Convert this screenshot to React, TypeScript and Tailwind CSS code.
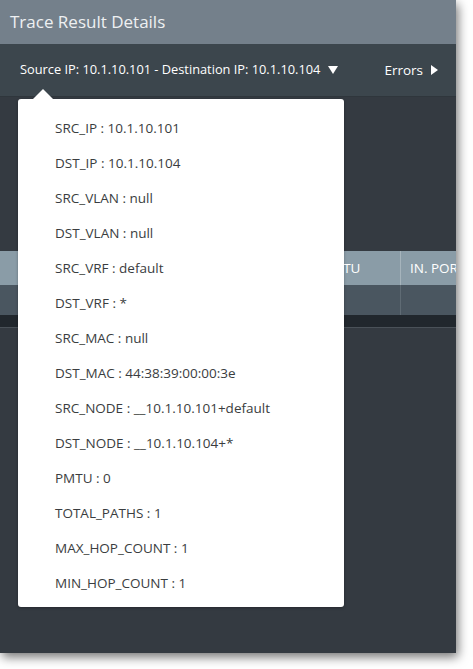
import React from 'react';

const fields = [
    ['SRC_IP', '10.1.10.101'],
    ['DST_IP', '10.1.10.104'],
    ['SRC_VLAN', 'null'],
    ['DST_VLAN', 'null'],
    ['SRC_VRF', 'default'],
    ['DST_VRF', '*'],
    ['SRC_MAC', 'null'],
    ['DST_MAC', '44:38:39:00:00:3e'],
    ['SRC_NODE', '__10.1.10.101+default'],
    ['DST_NODE', '__10.1.10.104+*'],
    ['PMTU', '0'],
    ['TOTAL_PATHS', '1'],
    ['MAX_HOP_COUNT', '1'],
    ['MIN_HOP_COUNT', '1'],
];

// widths of the table columns; the first ones sit under the popover
const columns = [
    { label: '', w: 'w-[110px]' },
    { label: '', w: 'w-[110px]' },
    { label: '', w: 'w-[102px]' },
    { label: 'MTU', w: 'w-[79px]' },
    { label: 'IN. PORT', w: 'w-[110px]' },
];

const font = { fontFamily: '"Open Sans", "Liberation Sans", sans-serif' };

export default function App() {
    return (
        <div className="w-[473px] h-[669px] bg-white overflow-hidden" style={font}>
            <div className="relative w-[456px] h-[653px] bg-[#343a41] flex flex-col shadow-[2px_4px_10px_rgba(0,0,0,0.55)] overflow-hidden">
                {/* Title */}
                <div className="h-[44px] bg-[#74808b] flex items-center px-[10px] text-[17px] text-[#eef0f2]">
                    Trace Result Details
                </div>

                {/* Path selector bar */}
                <div className="h-[53px] bg-[#3c464d] flex items-center justify-between pl-[20px] pr-[18px] font-medium text-white border-b border-[#2f363c]">
                    <div className="flex items-center gap-[8px]">
                        <span className="text-[12.8px]">Source IP: 10.1.10.101 - Destination IP: 10.1.10.104</span>
                        <svg width="10" height="8" viewBox="0 0 10 8"><path d="M0 0h10L5 8z" fill="#fff" /></svg>
                    </div>
                    <div className="flex items-center gap-[8px] text-[13.5px]">
                        <span>Errors</span>
                        <svg width="7" height="10" viewBox="0 0 7 10"><path d="M0 0l7 5-7 5z" fill="#fff" /></svg>
                    </div>
                </div>

                {/* Body */}
                <div className="flex-1 flex flex-col pt-[154px]">
                    <div className="flex h-[34px] bg-[#8a9ca7] text-[13.5px] font-medium text-white whitespace-nowrap">
                        {columns.map((c, i) => (
                            <div key={i} className={`flex items-center pl-[9px] border-r border-[#a6b4bc] ${c.w} shrink-0`}>
                                {c.label}
                            </div>
                        ))}
                    </div>
                    <div className="flex h-[30px] bg-[#4a5660]">
                        {columns.map((c, i) => (
                            <div key={i} className={`border-r border-[#5f6b74] ${c.w} shrink-0`} />
                        ))}
                    </div>
                    <div className="h-[13px] bg-[#21272d] border-b border-[#4a5158]" />
                </div>

                {/* Popover */}
                <div className="absolute left-[18px] top-[99px] w-[326px] h-[508px] bg-white rounded-[3px] shadow-[0_1px_3px_rgba(0,0,0,0.3)] pt-[12px] pl-[37px]">
                    <svg className="absolute left-[14px] top-[-10px]" width="22" height="11" viewBox="0 0 22 11">
                        <path d="M0 11L11 0l11 11z" fill="#fff" />
                    </svg>
                    {fields.map(([k, v]) => (
                        <div key={k} className="h-[35px] flex items-center text-[13.5px] text-[#3a3d40]">
                            {k} : {v}
                        </div>
                    ))}
                </div>
            </div>
        </div>
    );
}
